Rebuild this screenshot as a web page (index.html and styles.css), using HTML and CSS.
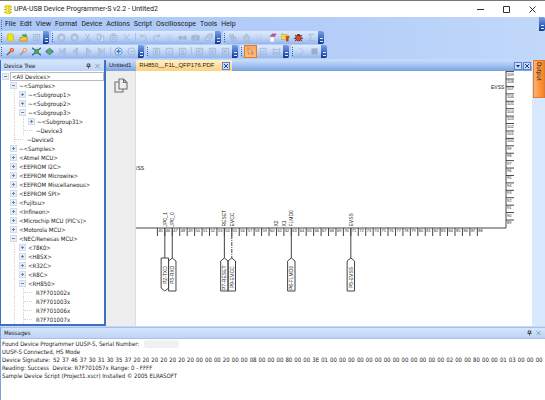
FILE: index.html
```html
<!DOCTYPE html>
<html lang="en">
<head>
<meta charset="utf-8">
<title>UPA-USB Device Programmer-S v2.2 - Untited2</title>
<link rel="stylesheet" href="styles.css">
</head>
<body>
<header class="titlebar">
  <svg class="app-icon" viewBox="0 0 8 10"><path d="M0 2h8M0 5h8M0 8h8" stroke="#5f5a20" stroke-width="1"/><rect x="1" width="6" height="10" rx="1" fill="#e3d81c"/><path d="M3 1v8" stroke="#fff68a"/></svg>
  <h1>UPA-USB Device Programmer-S v2.2 - Untited2</h1>
  <div class="window-buttons">
    <button aria-label="Minimize"><svg viewBox="0 0 7 7"><path d="M0 3.5h7"/></svg></button>
    <button aria-label="Maximize"><svg viewBox="0 0 7 7"><path d="M.5.5h6v6h-6z"/></svg></button>
    <button aria-label="Close"><svg viewBox="0 0 7 7"><path d="M.5.5l6 6M6.500.5l-6 6"/></svg></button>
  </div>
</header>

<nav class="menubar">
  <span class="grip"></span>
  <button>File</button><button>Edit</button><button>View</button><button>Format</button><button>Device</button><button>Actions</button><button>Script</button><button>Oscilloscope</button><button>Tools</button><button>Help</button>
  <span class="overflow push"></span>
</nav>

<div class="toolbars" id="toolbars"></div>

<main class="work">
  <section class="tree-panel">
    <div class="panel-head">
      <h2>Device Tree</h2>
      <button aria-label="Pin"><svg viewBox="0 0 6 6"><path d="M1.500.5h3v3h-3zM.5 3.500h5M3 3.500v2.500M4 .5v3"/></svg></button>
      <button class="faint" aria-label="Close"><svg viewBox="0 0 6 6"><path d="M.5.5l5 5M5.500.5l-5 5"/></svg></button>
    </div>
    <ul class="tree" id="tree"></ul>
  </section>

  <section class="documents">
    <div class="tabs">
      <button class="tab">Untited1</button>
      <div class="tab active"><button>RH850__F1L_QFP176.PDF</button><button class="box-button" aria-label="Close tab"><svg viewBox="0 0 6 6"><path d="M1 1l4 4M5 1l-4 4"/></svg></button></div>
      <div class="tab-tools">
        <button class="box-button" aria-label="Tab list"><svg viewBox="0 0 6 6"><path d="M1 2h4L3 4.500z" fill="#102a66" stroke="none"/></svg></button>
        <button class="box-button" aria-label="Close document"><svg viewBox="0 0 6 6"><path d="M1 1l4 4M5 1l-4 4"/></svg></button>
      </div>
    </div>
    <div class="viewer">
      <aside class="viewer-side">
        <button aria-label="Pages"><svg viewBox="0 0 14 15"><path d="M5 1h4.500l3.500 3.500V11H5zM9.500 1v3.500H13M5 4H1v10h8v-3" fill="none" stroke="#707070" stroke-width="1.100"/></svg></button>
      </aside>
      <svg class="schematic" id="schematic" viewBox="136 71 396 254" preserveAspectRatio="xMinYMin meet"></svg>
    </div>
  </section>

  <aside class="dock"><button>Output</button></aside>
</main>

<section class="messages">
  <div class="panel-head">
    <h2>Messages</h2>
    <button aria-label="Pin"><svg viewBox="0 0 6 6"><path d="M1.500.5h3v3h-3zM.5 3.500h5M3 3.500v2.500M4 .5v3"/></svg></button>
    <button class="faint" aria-label="Close"><svg viewBox="0 0 6 6"><path d="M.5.5l5 5M5.500.5l-5 5"/></svg></button>
  </div>
  <div class="log">
    <p>Found Device Programmer UUSP-S, Serial Number:<span class="redacted"></span></p>
    <p>UUSP-S Connected, HS Mode</p>
    <p>Device Signature: <span class="bytes" id="bytes"></span></p>
    <p>Reading: Success&nbsp; Device: R7F701057x Range: 0 - FFFF</p>
    <p>Sample Device Script (Project1.xscr) Installed © 2005 ELRASOFT</p>
  </div>
</section>
<script src="app.js"></script>
</body>
</html>
```
FILE: styles.css
```css
* { box-sizing: border-box; }
body {
  margin: 0;
  min-height: 100vh;
  display: flex;
  flex-direction: column;
  background: #c3d9f9;
  color: #222;
  font: 6px/8px "DejaVu Sans Condensed", "DejaVu Sans", sans-serif;
  overflow: hidden;
}
h1, h2, p, ul { margin: 0; padding: 0; font-size: inherit; font-weight: normal; }
button { margin: 0; padding: 0; border: 0; background: none; color: inherit; font: inherit; display: block; white-space: nowrap; }
svg { display: block; }

.titlebar {
  height: 17px;
  display: flex;
  align-items: center;
  gap: 2px;
  padding-left: 4px;
  background: #fff;
  border-top: 1px solid #777;
  font: 7px/10px Roboto, sans-serif;
}
.app-icon { width: 8px; height: 9px; }
.window-buttons { margin-left: auto; display: flex; }
.window-buttons button { width: 26px; height: 14px; display: grid; place-items: center; }
.window-buttons svg { width: 7px; height: 7px; fill: none; stroke: #333; }

.menubar {
  height: 14px;
  display: flex;
  align-items: center;
  gap: 4px;
  background: linear-gradient(90deg, #a9c7f7, #b4cef8 60%, #c1d8fa);
  font: 7px/10px Roboto, sans-serif;
}
.grip { width: 1px; height: 9px; margin-left: 1px; margin-right: 2px; border-left: 1px dotted #3d62a8; flex: none; }
.menubar .grip { margin-right: -1px; }
.overflow {
  position: relative;
  width: 6px;
  align-self: stretch;
  flex: none;
  background: linear-gradient(#7ba2e7, #3564bd 60%, #14398f);
  border-radius: 0 2px 2px 0;
}
.overflow::after { content: ""; position: absolute; right: 1px; bottom: 2px; width: 3px; height: 2px; border: 1px solid #dfe9fb; border-width: 1px 0; }
.push { margin-left: auto; }

.toolbars { background: linear-gradient(90deg, #a9c7f7, #b4cef8 60%, #c1d8fa); }
.toolbar-row { height: 14px; display: flex; gap: 2px; padding-bottom: 1px; }
.toolbar {
  display: flex;
  align-items: center;
  background: linear-gradient(#dfebfd, #c3d8f8 50%, #94b6ec);
  border-radius: 2px;
}
.toolbar button { width: 13px; height: 13px; display: grid; place-items: center; }
.toolbar button.on { background: linear-gradient(#f9a55e, #fdc07c); outline: 1px solid #e07a32; outline-offset: -1px; }
.toolbar svg { width: 9px; height: 9px; fill: none; stroke: #a3b5d3; }
.sep { width: 1px; height: 9px; margin: 0 1px 0 2px; background: #a9c0e6; }

.work { flex: 1; display: flex; padding-top: 1px; }
.panel-head {
  display: flex;
  align-items: center;
  gap: 4px;
  height: 11px;
  padding: 0 4px 0 3px;
  background: linear-gradient(#d6e5fb, #bdd4f7);
}
.panel-head h2 { margin-right: auto; }
.panel-head svg { width: 5px; height: 6px; fill: none; stroke: #444; }
.panel-head .faint svg { stroke: #8591a6; }

.tree-panel { width: 106px; flex: none; display: flex; flex-direction: column; border: 1px solid #3f70c9; border-width: 0 2px 2px 1px; }
.tree { flex: 1; background: #fff; list-style: none; padding-top: 1px; }
.tree li { display: flex; height: 9px; line-height: 9px; white-space: nowrap; }
.tree .guide { width: 9px; border-right: 1px dotted #d5d5d5; margin-right: 4px; margin-left: -4px; flex: none; }
.tree .guide.blank { border-color: transparent; }
.tree .toggle { width: 5px; height: 5px; margin: 2px 3px 0 1px; flex: none; background: #e9eef6; outline: 1px solid #d3dbe8; }
.tree .root .toggle { margin-left: 2px; margin-right: 2px; }
.tree .toggle svg { width: 5px; height: 5px; stroke: #6384bd; fill: none; }
.tree .leaf { width: 8px; height: 5px; border-bottom: 1px dotted #d5d5d5; margin-left: -4px; margin-right: 4px; flex: none; }
.tree .root .label { flex: 1; outline: 1px solid #bbb; outline-offset: -1px; padding-left: 2px; }

.documents { flex: 1; min-width: 0; display: flex; flex-direction: column; }
.tabs {
  height: 11px;
  display: flex;
  background: linear-gradient(#c9dcfa, #a3c2f1 50%, #7ba2e2);
  font: 6px/11px "Liberation Sans", Arial, sans-serif;
}
.tab { padding: 0 5px 0 3px; display: flex; align-items: center; gap: 8px; }
.tab.active { padding: 0 2px 0 3px; background: linear-gradient(#fff0c4, #ffd080); }
.box-button { width: 8px; height: 8px; display: grid; place-items: center; background: #c9dcfa; border: 1px solid #5d84cb; }
.box-button svg { width: 6px; height: 6px; fill: none; stroke: #1c3f86; }
.tab-tools { margin-left: auto; display: flex; align-items: center; gap: 1px; padding-right: 1px; }
.viewer { flex: 1; display: flex; background: #fff; }
.viewer-side { width: 30px; flex: none; padding: 7px 8px; background: #eee; border-right: 1px solid #ddd; }
.viewer-side svg { width: 14px; height: 15px; }
.schematic { flex: 1; min-width: 0; align-self: flex-start; font-family: "Liberation Sans", Arial, sans-serif; fill: #222; }
.schematic path { fill: none; stroke: #444; }
.schematic .net { font-size: 5px; }
.schematic .number { font-size: 4px; }

.dock { width: 13px; flex: none; background: #d9e9fd; }
.dock button {
  writing-mode: vertical-rl;
  width: 12px;
  height: 38px;
  margin-left: 1px;
  padding-top: 1px;
  text-align: left;
  line-height: 10px;
  background: linear-gradient(90deg, #ffb06a, #f58220);
  border: 1px solid #e07a32;
}

.messages { margin-top: 1px; border-left: 1px solid #7f9fd8; background: #fff; }
.messages .panel-head { height: 12px; border-top: 1px solid #a5c0ec; border-bottom: 1px solid #a5c0ec; }
.log { min-height: 61px; padding: 1px 0 0 1px; white-space: nowrap; }
.log p { display: flex; align-items: center; height: 8px; }
.log .bytes { flex: 1; display: flex; justify-content: space-between; padding: 0 2px 0 3px; }
.redacted { width: 35px; height: 8px; border-radius: 3px; background: #f1f1f1; margin-left: 5px; }
```
FILE: app.js
```js
const icons = {
  chip: '<path d="M1 3h8M1 5h8M1 7h8" stroke="#b3a92a"/><rect x="2" y="1" width="6" height="8" rx="1" fill="#f0e317" stroke="#d2c51c"/>',
  open: '<path d="M1 5h3l1-1h4v5H1z" fill="#f5c645" stroke="#c78e25"/><path d="M3 3c1-2 3-2 4-1V0l2 3-2 2V4c-2-1-3 0-4-1z" fill="#3da83a" stroke="none"/>',
  save: '<path d="M1.500 1.500h7v7h-7zM3.500 1.500v3h3v-3M3.500 8.500v-2h3v2"/>',
  disc: '<circle cx="5" cy="5" r="4" fill="#b4c4dd"/><path d="M3 5h4M5 3v4" stroke="#dce7f8"/>',
  cut: '<path d="M3 1l3 6M7 1L4 7"/><circle cx="3" cy="8" r="1"/><circle cx="7" cy="8" r="1"/>',
  copy: '<path d="M1.500 1.500h4v6h-4zM4.500 3.500h4v6h-4z" fill="#d3e0f5"/>',
  paste: '<path d="M1.500 2.500h7v7h-7zM3.500 1h3v2h-3zM3 5h4M3 7h4"/>',
  cross: '<path d="M1.500 1.500l7 7M8.500 1.500l-7 7"/>',
  undo: '<path d="M2 1v3h3M2 4c5-4 8 1 4 5"/>',
  redo: '<path d="M8 1v3H5M8 4C3 0 0 5 4 9"/>',
  dots: '<path d="M1 2.500h8M1 5h8M1 7.500h8" stroke-dasharray="1 1" stroke-opacity=".6"/>',
  find: '<path d="M1 7V4h3v3zM6 7V4h3v3zM2 3h1M7 3h1M4 5h2" fill="#a9b9d3"/>',
  find2: '<path d="M1 8V3h3v5zM6 8V3h3v5zM4 5h2M5 1v2" fill="#a9b9d3"/>',
  windows: '<path d="M1.500 4.500h5v4h-5zM3.500 2.500h5v4M3.500 2.500v2M5 1h5v4"/>',
  script: '<path d="M1 2h4v3H1zM5 5h3v4H5zM3 5v3h2" fill="#b7c7e0"/>',
  home: '<path d="M1 5l4-4 4 4M2.500 5v4h5V5" fill="#b7c7e0"/>',
  erase: '<path d="M2 3h5v7H2z" fill="#fff" stroke="#b5c4dd"/><path d="M3 3l2-2h4L7 4H3z" fill="#df4b9a" stroke="#7a3b8d" stroke-width=".6"/>',
  folder: '<path d="M0 1h3l1 1h4v5H0z" fill="#f3d84a" stroke="#b89b2a" stroke-width=".6"/><path d="M5 4h4v1H8v4H6V5z" fill="#d8402a" stroke="#8f2b1e" stroke-width=".5"/>',
  bug: '<path d="M1 2l2 2M9 2L7 4M0 6h10M1 9l2-2M9 9L7 7" stroke="#503020"/><circle cx="5" cy="5.500" r="3.200" fill="#e0462c" stroke="#7c2a1c" stroke-width=".8"/><path d="M3 3a2 2 0 014 0z" fill="#333" stroke="none"/>',
  sigma: '<path d="M8 1.500H2L5 5 2 8.500h6"/>',
  zoomIn: '<path d="M1 9l4-4" stroke="#8a6238" stroke-width="1.600"/><circle cx="6.500" cy="3.500" r="2" fill="#ff8a5a" stroke="#e84a23"/>',
  zoomOut: '<path d="M1 9l4-4" stroke="#b58a65" stroke-width="1.400"/><circle cx="6.500" cy="3.500" r="2" fill="#fbd3bd" stroke="#f08a4c"/>',
  fit: '<path d="M0 1l3 2M10 1L7 3M0 9l3-2M10 9L7 7" stroke="#2e5fb8" stroke-width="1.500"/><path d="M3 3h4v4H3z" fill="#4fae48" stroke="#338a3c"/>',
  width: '<path d="M0 5l3-3v6zM10 5L7 2v6z" fill="#5c86c9" stroke="none"/><path d="M5 1l3 4-3 4-3-4z" fill="#5bb050" stroke="#356fa8" stroke-width=".7"/>',
  first: '<path d="M2 1v8M8 1L3 5l5 4z" fill="#b4c6e2"/>',
  prev: '<path d="M7 1L2 5l5 4z" fill="#b4c6e2"/>',
  next: '<path d="M3 1l5 4-5 4z" fill="#b4c6e2"/>',
  last: '<path d="M8 1v8M2 1l5 4-5 4z" fill="#b4c6e2"/>',
  add: '<circle cx="5" cy="5" r="4" fill="#e7f2ff" stroke="#5f90d3"/><path d="M2.500 5h5M5 2.500v5" stroke="#3f76c4" stroke-width="1.500"/>',
  round: '<circle cx="5" cy="5" r="4"/><path d="M3 5h4"/>',
  bold: '<path d="M1.500 1.500h7v7h-7zM4 3h2v4H4zM4 5h2"/>',
  italic: '<path d="M1.500 1.500h7v7h-7zM6 3L4 7"/>',
  under: '<path d="M1.500 1.500h7v7h-7zM4 3v3h2V3M3 7.500h4"/>',
  align: '<path d="M1.500 1.500h7v7h-7zM3 3.500h4M3 5h3M3 6.500h4"/>',
  cursor: '<path d="M2 1l1 7 2-2 2 3 1-1-2-2h2z" fill="#fbd0a0" stroke="#b87a45" stroke-width=".8"/>',
  zoomBox: '<path d="M8 3V1.500H1.500v7H4"/><circle cx="6" cy="6" r="2"/><path d="M7.500 7.500l2 2"/>',
  measure: '<path d="M1.500 1v8M8.500 1v8M2 3h6M3 6h4v2H3z"/>',
  play: '<path d="M3 1l4 4-4 4"/>',
  stop: '<path d="M2 2h6v6H2z" fill="#9aaccb"/>'
};

const rows = [
  ['chip open save', 'disc disc cut copy paste cross | undo redo dots find find2 windows', 'script home dots erase folder bug sigma'],
  ['zoomIn zoomOut fit width first prev next last | add round', 'bold italic under | align align align', '*cursor zoomBox measure', 'play stop']
];

document.getElementById('toolbars').innerHTML = rows.map(bars =>
  '<div class="toolbar-row">' + bars.map(bar =>
    '<div class="toolbar"><span class="grip"></span>' + bar.split(' ').map(name => {
      if (name === '|') return '<span class="sep"></span>';
      const on = name[0] === '*';
      const key = name.replace('*', '');
      return `<button${on ? ' class="on"' : ''} aria-label="${key}"><svg viewBox="0 0 10 10">${icons[key]}</svg></button>`;
    }).join('') + '<span class="overflow"></span></div>').join('') + '</div>').join('');

// [depth, state, label]; state is "-" open, "+" closed, "" leaf
const nodes = [
  [0, '-', '<All Devices>'], [1, '-', '~<Samples>'], [2, '+', '~<Subgroup1>'], [2, '+', '~<Subgroup2>'],
  [2, '-', '~<Subgroup3>'], [3, '+', '~<Subgroup31>'], [3, '', '~Device3'], [2, '', '~Device0'],
  [1, '+', '~<Samples>'], [1, '+', '<Atmel MCU>'], [1, '+', '<EEPROM I2C>'], [1, '+', '<EEPROM Microwire>'],
  [1, '+', '<EEPROM Miscellaneous>'], [1, '+', '<EEPROM SPI>'], [1, '+', '<Fujitsu>'], [1, '+', '<Infineon>'],
  [1, '+', "<Microchip MCU (PIC's)>"], [1, '+', '<Motorola MCU>'], [1, '-', '<NEC/Renesas MCU>'],
  [2, '+', '<78K0>'], [2, '+', '<H8SX>'], [2, '+', '<R32C>'], [2, '+', '<R8C>'], [2, '-', '<RH850>'],
  [3, '', 'R7F701002x'], [3, '', 'R7F701003x'], [3, '', 'R7F701006x'], [3, '', 'R7F701007x']
];
const tree = document.getElementById('tree');
nodes.forEach(([depth, state, label]) => {
  const li = document.createElement('li');
  if (depth === 0) li.className = 'root';
  let html = '';
  for (let i = 0; i < depth; i++) html += `<span class="guide${i === 0 ? ' blank' : ''}"></span>`;
  html += state
    ? `<span class="toggle"><svg viewBox="0 0 5 5"><path d="M1 2.500h3${state === '+' ? 'M2.500 1v3' : ''}"/></svg></span>`
    : '<span class="leaf"></span>';
  li.innerHTML = html + '<span class="label"></span>';
  li.querySelector('.label').textContent = label;
  tree.append(li);
});

// Signature bytes share the rest of the log line evenly
const signature = '52 37 46 37 30 31 30 35 37 20 20 20 20 20 20 20 00 00 00 20 00 00 08 00 00 00 80 00 00 3E 01 00 00 00 00 00 00 00 00 00 00 00 00 00 02 00 00 80 00 00 01 03 00 00 00';
document.getElementById('bytes').innerHTML = signature.split(' ').map(b => `<span>${b}</span>`).join(' ');

// Schematic: chip outline, numbered pins, nets and connector flags
const bottomX = pin => 157.4 + (pin - 45) * 7.44;
let lines = 'M135 228H506V71';
let texts = '<text class="net" x="136" y="170">/SS</text><text class="net" x="491" y="89">EVSS</text>';
for (let pin = 45; pin <= 88; pin++) {
  const x = bottomX(pin);
  lines += `M${x} 228v8`;
  texts += `<text class="number" x="${x + 1}" y="232">${pin}</text>`;
}
for (let pin = 89; pin <= 109; pin++) {
  const y = 220 - (pin - 89) * 7.42;
  lines += `M506 ${y}h8`;
  texts += `<text class="number" x="507" y="${y + 4}">${pin}</text>`;
}
const up = (text, x, y) => `<text class="net" transform="translate(${x} ${y}) rotate(-90)">${text}</text>`;
[[46, 'JP0_1'], [47, 'JP0_0'], [54, 'RESET'], [55, 'EVCC'], [61, 'X2'], [62, 'X1'], [63, 'FLMD0'], [71, 'EVSS']]
  .forEach(([pin, name]) => { texts += up(name, bottomX(pin) + 2, 226.5); });
let dashed = '';
[[46, 'P2-TXD'], [47, 'P3-RXD'], [54, 'P7-RESET'], [55, 'P9-EVCC'], [63, 'P6-FLMD0'], [71, 'P5-EVSS']]
  .forEach(([pin, name]) => {
    const x = bottomX(pin), l = x - 3.7, r = x + 3.7;
    if (pin === 55) dashed += `M${x} 228V258`; else lines += `M${x} 228V258`;
    lines += pin === 46
      ? `M${l} 258H${r}V288L${x} 291L${l} 288Z`
      : `M${l} 291V261L${x} 258L${r} 261V291Z`;
    texts += up(name, x + 2, name.length > 7 ? 290 : name.length > 6 ? 288 : 284);
  });
document.getElementById('schematic').innerHTML =
  `<path d="${lines}"/><path d="${dashed}" stroke-dasharray="4 1 1 1"/>${texts}`;
```
